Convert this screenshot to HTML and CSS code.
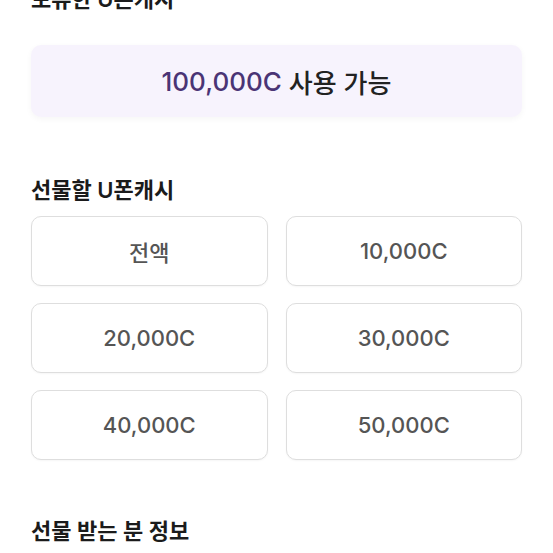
FILE: index.html
```html
<!DOCTYPE html>
<html lang="ko">
<head>
    <meta charset="UTF-8">
    <meta name="viewport" content="width=device-width, initial-scale=1.0">
    <title>U폰캐시 선물하기</title>
    <link rel="stylesheet" href="styles.css">
</head>
<body>
    <div class="page">
        <h2 class="title first">보유한 U폰캐시</h2>
        <div class="balance">
            <span class="amount">100,000C</span> 사용 가능
        </div>

        <h2 class="title gift">선물할 U폰캐시</h2>
        <div class="options">
            <button class="option">전액</button>
            <button class="option">10,000C</button>
            <button class="option">20,000C</button>
            <button class="option">30,000C</button>
            <button class="option">40,000C</button>
            <button class="option">50,000C</button>
        </div>

        <h2 class="title receiver">선물 받는 분 정보</h2>
    </div>
</body>
</html>
```

FILE: styles.css
```css
body {
    margin: 0;
    background: #ffffff;
    font-family: "Inter", "Noto Sans CJK KR", sans-serif;
    color: #1f1f1f;
}
.page {
    padding: 0 31px;
}
.title {
    margin: 0;
    font-size: 22px;
    line-height: 30px;
    font-weight: 600;
    color: #1b1b1b;
}
.first {
    margin-top: -16px;
}
.balance {
    margin-top: 31px;
    height: 72px;
    display: flex;
    align-items: center;
    justify-content: center;
    background: #f7f3fd;
    border-radius: 10px;
    box-shadow: 0 2px 6px rgba(0, 0, 0, 0.04);
    font-size: 26px;
    font-weight: 500;
    color: #222222;
    gap: 7px;
}
.amount {
    color: #4a3475;
}
.gift {
    margin-top: 58px;
}
.options {
    margin-top: 11px;
    display: grid;
    grid-template-columns: 1fr 1fr;
    column-gap: 18px;
    row-gap: 17px;
}
.option {
    height: 70px;
    border: 1px solid #dedede;
    border-radius: 10px;
    background: #ffffff;
    font-family: "Inter", "Noto Sans CJK KR", sans-serif;
    font-size: 22px;
    font-weight: 500;
    color: #555555;
    box-shadow: 0 1px 2px rgba(0, 0, 0, 0.04);
    cursor: pointer;
}
.receiver {
    margin-top: 56px;
}
```
